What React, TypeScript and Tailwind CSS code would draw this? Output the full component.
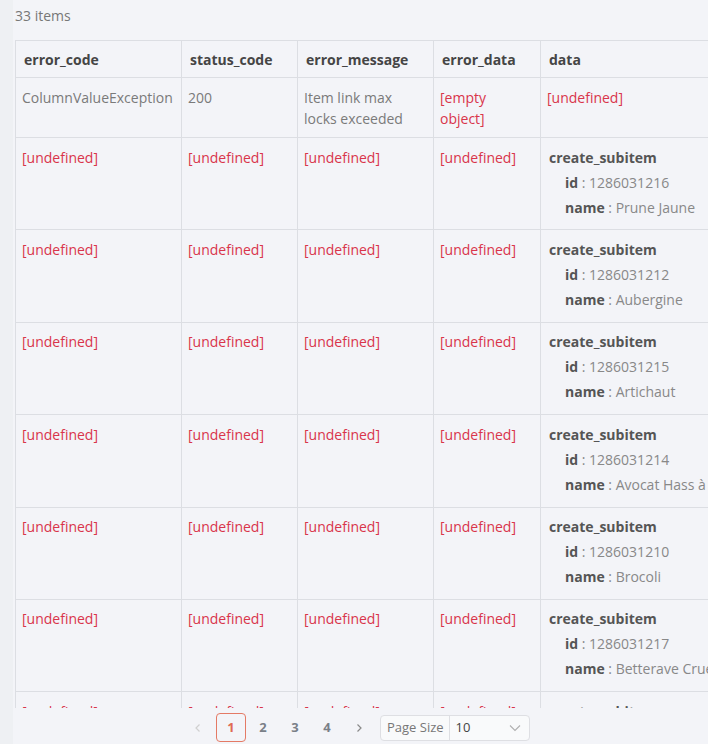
import React from "react";

const rows = [
  { id: "1286031216", name: "Prune Jaune" },
  { id: "1286031212", name: "Aubergine" },
  { id: "1286031215", name: "Artichaut" },
  { id: "1286031214", name: "Avocat Hass à maturité" },
  { id: "1286031210", name: "Brocoli" },
  { id: "1286031217", name: "Betterave Crue" },
  { id: "1286031211", name: "Carotte" },
];

const U = () => <span className="text-[#d9354b]">[undefined]</span>;

const td = "border border-[#dcdee3] align-top px-[6px] pt-[9px] pb-[8px] leading-[21px]";
const tdd = "border border-[#dcdee3] align-top px-[6px] pt-[8.5px] pb-[8px] leading-[21px]";
const th = "border border-[#dcdee3] text-left font-bold text-[#454545] px-[8px] pt-[8px] pb-[7px] leading-[21px]";

export default function App() {
  return (
    <div
      className="w-[708px] h-[744px] overflow-hidden flex flex-col bg-[linear-gradient(to_right,#eef0f3_13px,#f3f4f8_13px)] text-[14px] text-[#7a7a7a]"
      style={{ fontFamily: '"Open Sans", "Noto Sans", sans-serif' }}
    >
      <div className="pl-[15px] h-[30px] flex items-center text-[#777]">33 items</div>
      <div className="ml-[15px] mt-[10px] h-[668px] overflow-hidden">
        <table className="border-collapse table-fixed w-[866px]">
          <colgroup>
            <col className="w-[166px]" />
            <col className="w-[116px]" />
            <col className="w-[136px]" />
            <col className="w-[107px]" />
            <col className="w-[341px]" />
          </colgroup>
          <thead>
            <tr>
              <th className={th}>error_code</th>
              <th className={th}>status_code</th>
              <th className={th}>error_message</th>
              <th className={th}>error_data</th>
              <th className={th}>data</th>
            </tr>
          </thead>
          <tbody>
            <tr>
              <td className={td}>ColumnValueException</td>
              <td className={td}>200</td>
              <td className={td}>Item link max locks exceeded</td>
              <td className={td}>
                <span className="text-[#d9354b]">[empty object]</span>
              </td>
              <td className={td}>
                <U />
              </td>
            </tr>
            {rows.map((r) => (
              <tr key={r.id}>
                <td className={tdd}>
                  <U />
                </td>
                <td className={tdd}>
                  <U />
                </td>
                <td className={tdd}>
                  <U />
                </td>
                <td className={tdd}>
                  <U />
                </td>
                <td className={tdd}>
                  <div className="ml-[2px] mb-[3.9px] whitespace-nowrap">
                    <div className="font-bold text-[#555]">create_subitem</div>
                    <div className="pl-[16px] mt-[4px]">
                      <span className="font-bold text-[#555]">id</span>
                      <span className="text-[#888]"> : {r.id}</span>
                    </div>
                    <div className="pl-[16px] mt-[4px]">
                      <span className="font-bold text-[#555]">name</span>
                      <span className="text-[#888]"> : {r.name}</span>
                    </div>
                  </div>
                </td>
              </tr>
            ))}
          </tbody>
        </table>
      </div>
      <div className="h-[36px] pt-[3px] flex items-center">
        <div className="ml-[183px] flex items-center">
          <div className="w-[30px] h-[29px] flex items-center justify-center text-[#d0d0d0]">
            <svg width="10" height="10" viewBox="0 0 10 10" fill="none" stroke="currentColor" strokeWidth="1.2">
              <path d="M6.5 1.5 L3 5 L6.5 8.5" />
            </svg>
          </div>
          <div className="ml-[3px] w-[30px] h-[29px] rounded-[4px] border border-[#e47a65] flex items-center justify-center font-bold text-[#e06a54] text-[13px]">
            1
          </div>
          <div className="ml-[2px] w-[30px] h-[29px] flex items-center justify-center font-bold text-[#7a7f88] text-[13px]">2</div>
          <div className="ml-[2px] w-[30px] h-[29px] flex items-center justify-center font-bold text-[#7a7f88] text-[13px]">3</div>
          <div className="ml-[2px] w-[30px] h-[29px] flex items-center justify-center font-bold text-[#7a7f88] text-[13px]">4</div>
          <div className="ml-[2px] w-[30px] h-[29px] flex items-center justify-center text-[#8a8a8a]">
            <svg width="10" height="10" viewBox="0 0 10 10" fill="none" stroke="currentColor" strokeWidth="1.2">
              <path d="M3.5 1.5 L7 5 L3.5 8.5" />
            </svg>
          </div>
          <div className="ml-[6px] w-[150px] h-[26px] rounded-[4px] border border-[#dedfe3] bg-[#f9fafb] flex items-center text-[13px]">
            <span className="pl-[6px] pr-[5px] text-[#777] h-full flex items-center border-r border-[#dedfe3]">Page Size</span>
            <span className="pl-[6px] text-[#444] flex-1">10</span>
            <svg className="mr-[8px] text-[#b0b0b0]" width="12" height="8" viewBox="0 0 12 8" fill="none" stroke="currentColor" strokeWidth="1.1">
              <path d="M1 1.5 L6 6.5 L11 1.5" />
            </svg>
          </div>
        </div>
      </div>
    </div>
  );
}
